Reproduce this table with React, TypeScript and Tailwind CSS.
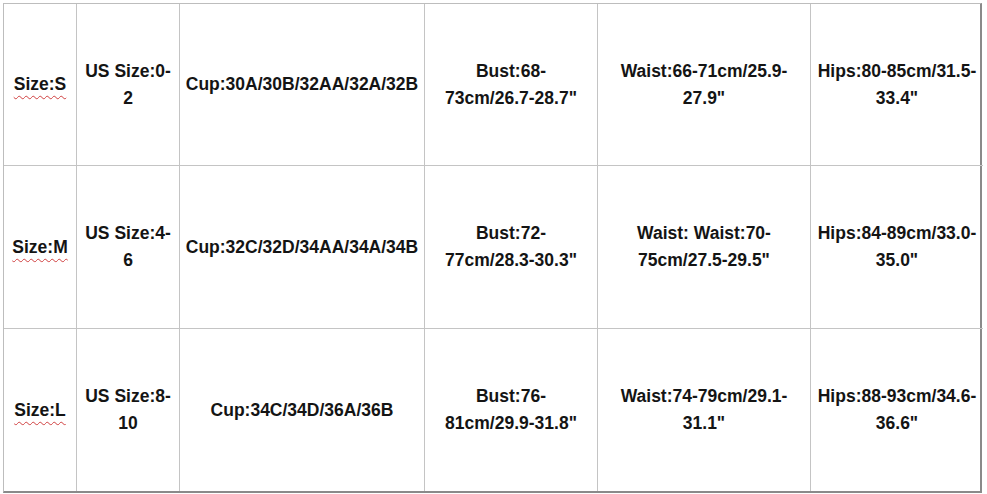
import React from "react";

const rows: { size: string; us: string[]; cup: string; bust: string[]; waist: string[]; hips: string[] }[] = [
  {
    size: "Size:S",
    us: ["US Size:0-", "2"],
    cup: "Cup:30A/30B/32AA/32A/32B",
    bust: ["Bust:68-", "73cm/26.7-28.7\""],
    waist: ["Waist:66-71cm/25.9-", "27.9\""],
    hips: ["Hips:80-85cm/31.5-", "33.4\""],
  },
  {
    size: "Size:M",
    us: ["US Size:4-", "6"],
    cup: "Cup:32C/32D/34AA/34A/34B",
    bust: ["Bust:72-", "77cm/28.3-30.3\""],
    waist: ["Waist: Waist:70-", "75cm/27.5-29.5\""],
    hips: ["Hips:84-89cm/33.0-", "35.0\""],
  },
  {
    size: "Size:L",
    us: ["US Size:8-", "10"],
    cup: "Cup:34C/34D/36A/36B",
    bust: ["Bust:76-", "81cm/29.9-31.8\""],
    waist: ["Waist:74-79cm/29.1-", "31.1\""],
    hips: ["Hips:88-93cm/34.6-", "36.6\""],
  },
];

function Lines({ l }: { l: string[] }) {
  return (
    <div className="flex flex-col items-center">
      {l.map((t, i) => (
        <span key={i} className="whitespace-nowrap">{t}</span>
      ))}
    </div>
  );
}

export default function App() {
  return (
    <div className="w-[987px] h-[494px] bg-white pl-[3px] pt-[3px]" style={{ fontFamily: '"Liberation Sans", Arial, sans-serif' }}>
      <div className="grid grid-cols-[73px_103px_245px_173px_213px_172px] grid-rows-[162px_163px_162px] w-[979px] border-l border-t border-[#bdbdbd] border-r-2 border-b-2 border-r-[#8a8a8a] border-b-[#8a8a8a] text-[17.5px] leading-[27px] font-bold text-[#141414]">
        {rows.map((r, i) => {
          const last = i === rows.length - 1;
          const cell = `flex items-center justify-center text-center border-[#c4c4c4] ${last ? "" : "border-b"}`;
          return (
            <React.Fragment key={r.size}>
              <div className={`${cell} border-r`}>
                <span className="underline decoration-wavy decoration-[#d04040] decoration-1 underline-offset-[5px]">{r.size}</span>
              </div>
              <div className={`${cell} border-r`}><Lines l={r.us} /></div>
              <div className={`${cell} border-r`}>{r.cup}</div>
              <div className={`${cell} border-r`}><Lines l={r.bust} /></div>
              <div className={`${cell} border-r`}><Lines l={r.waist} /></div>
              <div className={cell}><Lines l={r.hips} /></div>
            </React.Fragment>
          );
        })}
      </div>
    </div>
  );
}
